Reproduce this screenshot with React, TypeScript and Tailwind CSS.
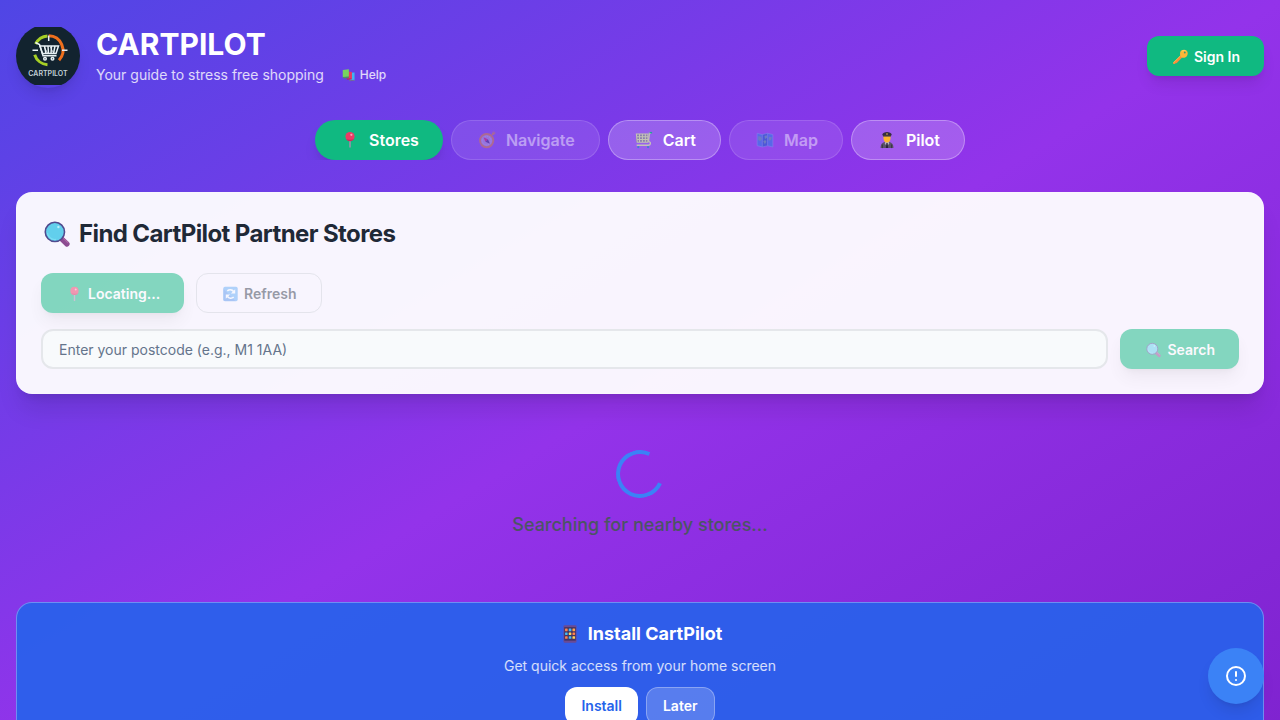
import type { ReactNode } from 'react';

const primary =
  'flex h-10 items-center justify-center gap-1 rounded-xl bg-[#10b981] px-6 pt-0.5 text-sm font-semibold text-white shadow-lg disabled:opacity-50';

function Logo() {
  return (
    <svg viewBox="0 0 64 64" className="size-16 rounded-full shadow-lg" role="img" aria-label="CartPilot">
      <rect y="3" width="64" height="58" fill="#12232f" />
      <g fill="none" strokeWidth="3">
        <path d="M32.700 11.800a14.500 14.500 0 0 1 10.300 24.400" stroke="#ee6f1d" />
        <path d="M31.500 11.900a14.500 14.500 0 0 0-11.900 8.100" stroke="#a6cf26" />
        <path d="M18.700 30.700a14.500 14.500 0 0 0 12.800 10" stroke="#a6cf26" />
      </g>
      <g stroke="#e8f1f4" strokeWidth="1.500" fill="none">
        <path d="M32.700 11.500v5.500M16.500 26.300h5.500M46 26.300h5.500" />
        <path d="M19.500 18.500l4 2 3.500 11.300h13.500" />
        <path d="M24 22h18.500l-2.500 7.500H26.500zM28.500 22l1.500 7.500M32 22l.5 7.500M35.500 22l-.5 7.500M39 22l-1.500 7.500" />
        <path d="M28 22.500l3.500 6.500M34 22.500l3.500 6.500" strokeWidth=".8" />
        <circle cx="29" cy="34.700" r="1.300" />
        <circle cx="36.500" cy="34.700" r="1.300" />
      </g>
      <text x="32" y="51.500" textAnchor="middle" fill="#c3d1d8" fontSize="7" className="font-semibold">
        CARTPILOT
      </text>
    </svg>
  );
}

const glyphs: Record<string, ReactNode> = {
  pin: (
    <>
      <path d="M7.300 8h1.400v6.300L8 15.200l-.7-.9z" fill="#9b93ab" />
      <circle cx="8" cy="4.900" r="4.100" fill="#ea3b66" />
      <path d="M4.500 7a4.100 4.100 0 0 0 7.200-.1C9.500 8 6.500 8 4.500 7z" fill="#cc2a5c" />
      <circle cx="9.200" cy="3.400" r="1" fill="#ff9db4" />
    </>
  ),
  compass: (
    <>
      <path d="M12.500 3.500l1.500-1.500" stroke="#e59a3c" strokeWidth="1.500" />
      <circle cx="14" cy="1.900" r="1" fill="none" stroke="#e59a3c" strokeWidth=".7" />
      <circle cx="7.700" cy="8.500" r="5.900" fill="#b5aed6" stroke="#e5973e" strokeWidth="1.700" />
      <circle cx="7.700" cy="8.500" r="3.900" fill="none" stroke="#e2dcef" strokeWidth=".6" strokeDasharray="1 1" />
      <path d="M4.800 5.600l4 1.800-2.200 2.200z" fill="#e2346a" />
      <path d="M10.600 11.400l-4-1.800 2.200-2.200z" fill="#4a3f7b" />
    </>
  ),
  cart: (
    <>
      <path d="M1 2.600h10.800V10H1z" fill="#8a7fae" />
      <g fill="none" stroke="#c4c3b6" strokeWidth=".9">
        <path d="M1.200 2.600h10.300V10H2zM1.400 5.100h10M1.600 7.500h9.600M4 2.600V10M6.600 2.600V10M9.200 2.600V10" />
        <path d="M1.500 12.700h10.300c2 0 2.700-2.500.8-3.200L11.500 9M12 9l.8-7h1.500" strokeWidth="1.200" />
      </g>
      <path d="M13 1.500h2.200" stroke="#279e9e" strokeWidth="1.300" />
      <circle cx="2.900" cy="14.300" r="1" fill="#3f83ce" />
      <circle cx="11.600" cy="14.300" r="1" fill="#3f83ce" />
    </>
  ),
  map: (
    <>
      <path d="M1 2l4.600 1.200L10.300 2 15 3.200v11l-4.700-1.100-4.700 1.100L1 13z" fill="#2c9ae8" />
      <path d="M5.600 3.200L10.300 2v11.100l-4.700 1.100z" fill="#1778c6" />
      <path d="M2 4.500l2.500.5.800 2-1.600 2-1.800-1.200zM6.500 9l1.700-1 1 1.500-1.300 2.300zM7.500 4.500l2-.7.500 2-2 1.200zM11.500 5l2.700.6-1 2.600-2 .2z" fill="#59bda1" />
      <path d="M1 2l4.600 1.200L10.300 2 15 3.200v11l-4.700-1.100-4.700 1.100L1 13zM5.600 3.200v11M10.300 2v11" stroke="#8fc8f2" strokeWidth=".5" fill="none" />
    </>
  ),
  pilot: (
    <>
      <path d="M2.300 15.200c0-3.800 1.500-5.400 5.700-5.400s5.700 1.600 5.700 5.400z" fill="#5a5269" />
      <path d="M6.500 9.300h3l.5 2-2 2-2-2z" fill="#b9b2c6" />
      <path d="M7.500 10.700h1l.5 4.500H7z" fill="#292333" />
      <path d="M4.900 4h6.200v2.500C11.100 9 9.800 10.300 8 10.300S4.900 9 4.900 6.500z" fill="#ffb52e" />
      <path d="M3.900 3.200C4 1.700 6 .8 8 .8s4 .9 4.100 2.400l-.7 1.600H4.600z" fill="#352d40" />
      <path d="M4.700 4.700h6.600" stroke="#8b6e42" strokeWidth=".8" />
      <circle cx="8" cy="2.600" r=".7" fill="#ffc83d" />
      <path d="M3.900 12v3.200M12.100 12v3.200" stroke="#302a3b" strokeWidth=".7" />
    </>
  ),
  key: (
    <>
      <path d="M8.300 6.500l1.600 1.700-5.800 6-.8-.3-.8 1-1.700.1-.2-1.600z" fill="#f98c3c" />
      <path d="M8.200 6.600L.9 13.800" stroke="#ffc24a" strokeWidth=".9" />
      <path d="M8.400 1.700c2-1.300 4.600-1.300 5.900.1s1.300 4-.2 5.800c-1.600 1.500-4.200 1.700-5.500.3s-1.500-4.300-.2-6.200z" fill="#fdb636" />
      <path d="M9.300 2.200c1.300-.8 3.100-.9 4 0" stroke="#ffd869" strokeWidth=".9" fill="none" />
      <circle cx="12.300" cy="3.500" r=".9" fill="#39996f" />
    </>
  ),
  search: (
    <>
      <path d="M10.600 10.800l3.100 2.900" stroke="#8c4b91" strokeWidth="3" strokeLinecap="round" />
      <path d="M11.600 10.500l2.600 2.400" stroke="#aa65a4" strokeWidth=".7" strokeLinecap="round" />
      <circle cx="6.800" cy="6.800" r="5.500" fill="#62cfec" stroke="#504a8e" strokeWidth=".9" />
      <path d="M2.500 7.400a4.400 4.400 0 0 0 5 3.700" stroke="#79def3" strokeWidth=".7" fill="none" />
      <circle cx="8.800" cy="4" r=".7" fill="#b8f0fa" />
    </>
  ),
  refresh: (
    <>
      <rect x=".8" y=".8" width="14.400" height="14.400" rx="1.700" fill="#69aef8" />
      <path d="M1 14.200V3l12 12H2z" fill="#5d96ee" />
      <g fill="none" stroke="#f5faff" strokeWidth="1.600">
        <path d="M4.800 4.800c2-1.500 4.800-1.200 6.300.7M11.200 11.200c-2 1.500-4.800 1.200-6.300-.7" />
      </g>
      <path d="M12.700 3.200v4.300H8.400zM3.300 12.800V8.500h4.300z" fill="#f5faff" />
    </>
  ),
  phone: (
    <>
      <rect x="2.200" y=".3" width="11.600" height="15.400" rx="1" fill="#6b4a94" />
      <rect x="2.900" y="1.900" width="10.200" height="12" fill="#433463" />
      {['#ff824d', '#43b9f5', '#ffa34d', '#43b9f5', '#ffd45c', '#ff824d', '#ff824d', '#43b9f5', '#ffd45c'].map((c, i) => (
        <rect key={i} x={3.6 + (i % 3) * 3.3} y={3.2 + Math.floor(i / 3) * 3.4} width="2.300" height="2.300" rx=".4" fill={c} />
      ))}
    </>
  ),
  books: (
    <>
      <path d="M10 5.500l5.500-.5v9.200l-5.500.3z" fill="#3fb5f1" />
      <path d="M9 14l6.500-.6v1.300L9.500 15z" fill="#716798" />
      <path d="M7.500 4l5 .5v8.300l-5-.3z" fill="#e93763" />
      <path d="M6 11.600l6 .5v1l-5 .2z" fill="#b02d62" />
      <path d="M2 2.200l7-.7v8.600l-7 .6z" fill="#77d45e" />
      <path d="M2 10.200l7-.6v1.800l-6 .6z" fill="#4b8e68" />
    </>
  ),
};

function Glyph({ name, className = 'h-4 w-[19px]' }: { name: string; className?: string }) {
  return (
    <svg viewBox="0 0 16 16" className={`shrink-0 ${className}`} aria-hidden="true">
      {glyphs[name]}
    </svg>
  );
}

const tabs = [
  { icon: 'pin', label: 'Stores', state: 'active' },
  { icon: 'compass', label: 'Navigate', state: 'disabled' },
  { icon: 'cart', label: 'Cart', state: 'normal' },
  { icon: 'map', label: 'Map', state: 'disabled' },
  { icon: 'pilot', label: 'Pilot', state: 'normal' },
];

const tabStyles: Record<string, string> = {
  active: 'bg-[#10b981] text-white shadow-lg',
  normal: 'border border-white/30 bg-white/20 text-white',
  disabled: 'border border-white/30 bg-white/20 text-white opacity-50',
};

export default function App() {
  return (
    <div className="min-h-screen bg-[linear-gradient(to_bottom_right,#4f46e5,#9333ea,#7e22ce)] px-4 pt-6 pb-8 font-['Inter',sans-serif]">
      <header className="flex items-center justify-between">
        <div className="flex items-center gap-4">
          <Logo />
          <div>
            <h1 className="text-3xl font-bold text-white">CARTPILOT</h1>
            <div className="mt-0.5 flex items-center gap-2">
              <p className="text-sm leading-[22px] text-white/80">Your guide to stress free shopping</p>
              <a href="#help" className="flex items-center gap-1 px-2 text-xs font-medium text-white/80">
                <Glyph name="books" className="h-3.5 w-4" />
                Help
              </a>
            </div>
          </div>
        </div>
        <button className={primary}>
          <Glyph name="key" />
          Sign In
        </button>
      </header>

      <nav className="mt-8 flex justify-center gap-2 overflow-x-auto">
        {tabs.map((t) => (
          <button
            key={t.label}
            disabled={t.state === 'disabled'}
            className={`flex h-10 items-center gap-2 rounded-full px-6 font-semibold ${tabStyles[t.state]}`}
          >
            <Glyph name={t.icon} className="h-[18px] w-[22px]" />
            {t.label}
          </button>
        ))}
      </nav>

      <main>
        <section className="mt-8 rounded-2xl border border-white/20 bg-white/95 p-6 shadow-xl">
          <h2 className="flex items-center gap-1.5 text-2xl leading-[34px] font-bold tracking-tight text-[#1f2937]">
            <Glyph name="search" className="h-7 w-8" />
            Find CartPilot Partner Stores
          </h2>
          <div className="mt-[22px] flex gap-3">
            <button disabled className={primary}>
              <Glyph name="pin" />
              Locating...
            </button>
            <button
              disabled
              className="flex h-10 items-center gap-1 rounded-xl border border-[#d1d5db] px-6 pt-0.5 text-sm font-semibold text-[#374151] opacity-50"
            >
              <Glyph name="refresh" />
              Refresh
            </button>
          </div>
          <form className="mt-4 flex gap-3">
            <input
              type="text"
              aria-label="Postcode"
              placeholder="Enter your postcode (e.g., M1 1AA)"
              className="h-10 min-w-0 flex-1 rounded-xl border-2 border-[#e5e7eb] bg-[#f8fafc] px-4 text-sm placeholder:text-[#64748b]"
            />
            <button disabled className={primary}>
              <Glyph name="search" />
              Search
            </button>
          </form>
        </section>

        <div className="mt-6 flex flex-col items-center py-8" role="status">
          <div className="size-12 rotate-70 rounded-full border-4 border-[#3b82f6] border-t-transparent" />
          <p className="mt-3 text-lg leading-[30px] font-medium text-[#4b5563]">Searching for nearby stores...</p>
        </div>

        <section className="mt-[30px] flex flex-col items-center rounded-2xl border border-white/30 bg-[#2563eb]/90 p-4">
          <h3 className="flex items-center gap-1.5 text-lg leading-[30px] font-bold text-white">
            <Glyph name="phone" className="h-[18px] w-6" />
            Install CartPilot
          </h3>
          <p className="mt-1.5 text-sm leading-[22px] text-white/80">Get quick access from your home screen</p>
          <div className="mt-2.5 flex gap-2">
            <button className="h-[38px] rounded-xl bg-white px-4 text-sm font-semibold text-[#2563eb]">Install</button>
            <button className="h-[38px] rounded-xl border border-white/30 bg-white/20 px-4 text-sm font-semibold text-white">
              Later
            </button>
          </div>
        </section>
      </main>

      <button
        aria-label="Report an issue"
        className="fixed right-4 bottom-4 flex size-14 items-center justify-center rounded-full bg-[#3b82f6] text-white shadow-lg"
      >
        <svg
          viewBox="0 0 24 24"
          className="size-6"
          fill="none"
          stroke="currentColor"
          strokeWidth="2"
          strokeLinecap="round"
          strokeLinejoin="round"
          aria-hidden="true"
        >
          <path d="M12 8v4m0 4h.01M21 12a9 9 0 11-18 0 9 9 0 0118 0z" />
        </svg>
      </button>
    </div>
  );
}
